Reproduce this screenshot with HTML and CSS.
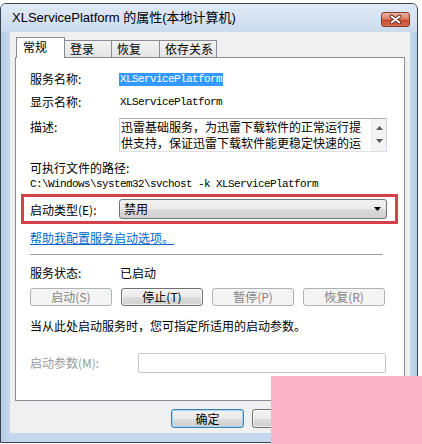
FILE: index.html
```html
<!DOCTYPE html>
<html lang="zh-CN">
<head>
<meta charset="utf-8">
<title>XLServicePlatform 的属性(本地计算机)</title>
<link rel="stylesheet" href="styles.css">
</head>
<body>
<div class="window">
  <div class="titlebar">
    <span class="title">XLServicePlatform 的属性(本地计算机)</span>
    <div class="close">
      <svg width="29" height="15" viewBox="0 0 29 15">
        <path d="M10.5 4.5 L18.5 10.5 M18.5 4.5 L10.5 10.5" stroke="#5a2014" stroke-width="3.6" stroke-linecap="round" fill="none"/>
        <path d="M10.5 4.5 L18.5 10.5 M18.5 4.5 L10.5 10.5" stroke="#ffffff" stroke-width="2" stroke-linecap="round" fill="none"/>
      </svg>
    </div>
  </div>
  <div class="client">
    <div class="tabs">
      <div class="tab active t1">常规</div>
      <div class="tab t2">登录</div>
      <div class="tab t3">恢复</div>
      <div class="tab t4">依存关系</div>
    </div>
    <div class="panel">
      <div class="row r1">
        <span class="lbl">服务名称:</span>
        <span class="mono sel">XLServicePlatform</span>
      </div>
      <div class="row r2">
        <span class="lbl">显示名称:</span>
        <span class="mono">XLServicePlatform</span>
      </div>
      <div class="row desc">
        <span class="lbl lbl-desc">描述:</span>
        <div class="ta">
          <div class="ta-text">
            <div>迅雷基础服务，为迅雷下载软件的正常运行提</div>
            <div>供支持，保证迅雷下载软件能更稳定快速的运</div>
          </div>
          <div class="ta-scroll">
            <svg width="7" height="4" viewBox="0 0 7 4"><path d="M0 4 L3.5 0 L7 4 Z" fill="#5a5a5a"/></svg>
            <svg width="7" height="4" viewBox="0 0 7 4"><path d="M0 0 L7 0 L3.5 4 Z" fill="#5a5a5a"/></svg>
          </div>
        </div>
      </div>
      <div class="row">可执行文件的路径:</div>
      <div class="row mono">C:\Windows\system32\svchost -k XLServicePlatform</div>
      <div class="redbox">
        <span class="lbl lbl-type">启动类型(E):</span>
        <div class="combo">
          <span>禁用</span>
          <svg width="7" height="4" viewBox="0 0 7 4"><path d="M0 0 L7 0 L3.5 4 Z" fill="#000"/></svg>
        </div>
      </div>
      <div class="row link">帮助我配置服务启动选项。</div>
      <div class="sep"></div>
      <div class="row status">
        <span class="lbl">服务状态:</span>
        <span>已启动</span>
      </div>
      <div class="btnrow">
        <div class="btn disabled">启动(S)</div>
        <div class="btn">停止(T)</div>
        <div class="btn disabled">暂停(P)</div>
        <div class="btn disabled">恢复(R)</div>
      </div>
      <div class="row hint">当从此处启动服务时，您可指定所适用的启动参数。</div>
      <div class="row param">
        <span class="lbl lbl-param">启动参数(M):</span>
        <div class="input"></div>
      </div>
    </div>
    <div class="actions">
      <div class="btn dlg default">确定</div>
      <div class="btn dlg">取消</div>
      <div class="btn dlg disabled">应用(A)</div>
    </div>
  </div>
</div>
<div class="cover"></div>
</body>
</html>
```
FILE: styles.css
```css
* { box-sizing: border-box; }
html, body { margin: 0; padding: 0; background: #fff; }
body {
  font-family: "Noto Sans CJK SC", sans-serif;
  font-size: 12px;
  color: #000;
  position: relative;
  width: 422px;
  height: 444px;
  overflow: hidden;
}
.window {
  margin-top: 3px;
  width: 418px;
  height: 440px;
  border: 1px solid #3b4651;
  border-radius: 6px 6px 0 0;
  background: linear-gradient(to right, #b6cce6 0, #c6d8ee 9px, #c6d8ee calc(100% - 7px), #b6cce6 100%);
  display: flex;
  flex-direction: column;
}
.titlebar {
  height: 28px;
  flex: none;
  display: flex;
  align-items: flex-start;
  justify-content: space-between;
  background: linear-gradient(#e0eaf6, #cbdbee);
  border-radius: 5px 5px 0 0;
  padding-left: 11px;
}
.title {
  font-family: "Liberation Sans", "Noto Sans CJK SC", sans-serif;
  font-size: 13px;
  line-height: 16px;
  margin-top: 6px;
}
.close {
  width: 29px;
  height: 15px;
  margin-top: 8px;
  margin-right: 7px;
  border: 1px solid #8a3a2c;
  border-radius: 3px;
  background: linear-gradient(#eab0a2 0, #d9806b 45%, #c84a32 55%, #d66a4e 100%);
  display: flex;
  align-items: center;
  justify-content: center;
}
.close svg { display: block; margin: -1px; }
.client {
  margin: 0 7px 0 9px;
  height: 401px;
  flex: none;
  background: #f0f0f0;
  padding-top: 5px;
  display: flex;
  flex-direction: column;
}
.tabs {
  display: flex;
  align-items: flex-end;
  height: 20px;
  margin-left: 6px;
  position: relative;
  z-index: 1;
}
.tab {
  height: 17px;
  border: 1px solid #898c95;
  border-bottom: none;
  background: linear-gradient(#f3f3f3, #e4e4e4);
  padding-left: 5px;
  padding-top: 0;
  line-height: 16px;
  margin-left: -1px;
}
.tab.active {
  height: 21px;
  margin-bottom: -1px;
  margin-left: 0;
  background: #fff;
  padding-left: 6px;
  padding-top: 1px;
}
.t1 { width: 49px; }
.t2 { width: 48px; }
.t3 { width: 49px; }
.t4 { width: 58px; }
.panel {
  margin-left: 5px;
  width: 390px;
  height: 344px;
  flex: none;
  border: 1px solid #898c95;
  background: #fff;
  padding: 13px 0 0 14px;
}
.row {
  display: flex;
  height: 16px;
  line-height: 16px;
  white-space: nowrap;
}
.lbl { width: 90px; flex: none; }
.mono {
  font-family: "Liberation Mono", monospace;
  font-size: 11px;
  letter-spacing: -0.6px;
}
.r1 { margin-bottom: 7px; align-items: center; }
.r2 { margin-bottom: 8px; }
.sel {
  background: #3399ff;
  color: #fff;
  height: 13px;
  line-height: 13px;
  padding: 0 1px 0 1px;
  margin-left: -1px;
}
.desc { height: 34px; margin-bottom: 8px; }
.lbl-desc { padding-top: 1px; width: 89px; }
.ta {
  width: 268px;
  height: 34px;
  border: 1px solid #abadb3;
  border-left-color: #d5d8df;
  border-right-color: #d5d8df;
  border-bottom-color: #dbe0e6;
  background: #fff;
  display: flex;
}
.ta-text {
  flex: 1;
  padding-left: 1px;
  line-height: 16px;
  overflow: hidden;
}
.ta-scroll {
  width: 15px;
  flex: none;
  background: #f4f4f4;
  border-left: 1px solid #ececec;
  display: flex;
  flex-direction: column;
  align-items: center;
  justify-content: space-between;
  padding: 7px 0 8px;
}
.ta-scroll svg { display: block; }
.redbox {
  margin-top: 2px;
  margin-left: -9px;
  width: 377px;
  height: 30px;
  border: 3px solid #d6404b;
  padding-left: 6px;
  display: flex;
  align-items: center;
}
.lbl-type { width: 89px; line-height: 16px; padding-top: 1px; }
.combo {
  width: 268px;
  height: 20px;
  border: 1px solid #707070;
  border-radius: 3px;
  background: linear-gradient(#f2f2f2 0, #ebebeb 50%, #dddddd 50%, #cfcfcf 100%);
  display: flex;
  align-items: center;
  justify-content: space-between;
  padding: 0 5px 0 4px;
  line-height: 16px;
}
.combo svg { display: block; }
.link {
  margin-top: 6px;
  color: #0066cc;
  text-decoration: underline;
}
.sep {
  margin-top: 8px;
  width: 353px;
  height: 0;
  border-top: 1px solid #a0a0a0;
}
.status { margin-top: 10px; }
.btnrow {
  margin-top: 7px;
  display: flex;
  gap: 9px;
}
.btn {
  width: 82px;
  height: 18px;
  border: 1px solid #707070;
  border-radius: 3px;
  background: linear-gradient(#f2f2f2 0, #ebebeb 50%, #dddddd 50%, #cfcfcf 100%);
  box-shadow: inset 0 0 0 1px rgba(255,255,255,0.6);
  text-align: center;
  line-height: 16px;
  white-space: nowrap;
}
.btn.disabled {
  border-color: #adb2b5;
  background: #f4f4f4;
  box-shadow: none;
  color: #838383;
}
.hint { margin-top: 12px; }
.param { margin-top: 19px; height: 20px; line-height: 20px; }
.lbl-param { width: 108px; color: #9a9a9a; }
.input {
  width: 248px;
  height: 20px;
  border: 1px solid #c4c6cb;
  border-radius: 2px;
  background: #fff;
}
.actions {
  margin-top: 8px;
  display: flex;
  justify-content: flex-end;
  gap: 8px;
  padding-right: 4px;
}
.btn.dlg { width: 73px; height: 19px; line-height: 17px; }
.btn.default {
  border-color: #3c7fb1;
  box-shadow: inset 0 0 0 1px #a9d3f2;
}
.cover {
  position: absolute;
  left: 271px;
  top: 376px;
  width: 151px;
  height: 68px;
  background: #fab3c8;
}
```
